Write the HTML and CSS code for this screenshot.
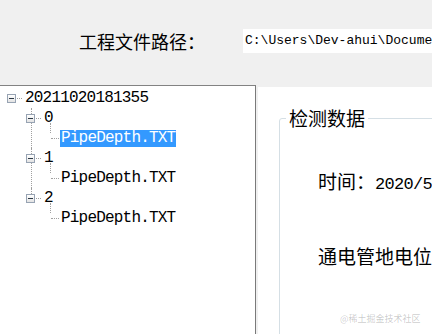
FILE: index.html
```html
<!DOCTYPE html>
<html lang="zh-CN">
<head>
  <meta charset="UTF-8" />
  <meta name="viewport" content="width=device-width, initial-scale=1.0"/>
  <title>管道检测数据</title>
  <link rel="stylesheet" href="styles.css">
</head>
<body>

<div class="path-bar">
  <span class="path-label">工程文件路径：</span>
  <div class="path-input">C:\Users\Dev-ahui\Documents</div>
</div>

<div class="main">
  <div class="tree-panel">
    <ul class="tree">
      <li class="node root">
        <div class="row"><span class="expander"></span><span class="link"></span><span class="label">20211020181355</span></div>
        <ul class="children">
          <li class="node">
            <div class="row"><span class="expander"></span><span class="link"></span><span class="label">0</span></div>
            <ul class="children leaves">
              <li class="leaf"><div class="row"><span class="label selected">PipeDepth.TXT</span></div></li>
            </ul>
          </li>
          <li class="node">
            <div class="row"><span class="expander"></span><span class="link"></span><span class="label">1</span></div>
            <ul class="children leaves">
              <li class="leaf"><div class="row"><span class="label">PipeDepth.TXT</span></div></li>
            </ul>
          </li>
          <li class="node">
            <div class="row"><span class="expander"></span><span class="link"></span><span class="label">2</span></div>
            <ul class="children leaves">
              <li class="leaf"><div class="row"><span class="label">PipeDepth.TXT</span></div></li>
            </ul>
          </li>
        </ul>
      </li>
    </ul>
  </div>

  <div class="detail-panel">
    <fieldset class="group">
      <legend>检测数据</legend>
      <div class="group-body">
        <div class="field">时间：<span class="num">2020/5/20</span></div>
        <div class="field">通电管地电位：</div>
      </div>
    </fieldset>
  </div>
</div>

<div class="watermark">@稀土掘金技术社区</div>

</body>
</html>
```

FILE: styles.css
```css
html, body {
  margin: 0;
  padding: 0;
  background: #f0f0f0;
}

body {
  position: relative;
  width: 432px;
  height: 334px;
  overflow: hidden;
  font-family: "Noto Sans CJK SC", sans-serif;
  color: #000;
}

/* top path bar */
.path-bar {
  height: 85px;
  box-sizing: border-box;
  padding: 29px 0 0 79px;
  display: flex;
  align-items: flex-start;
  gap: 38px;
  white-space: nowrap;
}

.path-label {
  font-size: 18px;
  line-height: 24px;
  height: 24px;
}

.path-input {
  flex: none;
  width: 220px;
  height: 24px;
  line-height: 24px;
  padding-left: 2px;
  background: #fff;
  font-family: "Liberation Mono", monospace;
  font-size: 13px;
  overflow: hidden;
}

.main {
  display: flex;
  height: 249px;
}

/* tree view */
.tree-panel {
  flex: none;
  width: 255px;
  background: #fff;
  border-top: 1px solid #828282;
  border-right: 1px solid #7a7a7a;
  padding-top: 2px;
  font-family: "Liberation Mono", monospace;
  font-size: 16px;
  letter-spacing: -0.8px;
}

.tree, .children {
  list-style: none;
  margin: 0;
  padding: 0;
}

.row {
  height: 20px;
  display: flex;
  align-items: center;
  white-space: nowrap;
}

.root > .row {
  padding-left: 7px;
}

.children > li {
  position: relative;
  padding-left: 26px;
}

.children > li::before {
  content: '';
  position: absolute;
  left: 31px;
  top: 0;
  bottom: 0;
  border-left: 1px dotted #a0a0a0;
}

.children > li:last-child::before {
  bottom: auto;
  height: 10px;
}

/* leaf rows sit inside the parent item, which already has 26px padding */
.leaves > li {
  padding-left: 0;
}

.leaves > li::before {
  left: 24px;
  top: -5px;
  height: 15px;
}

.leaves > li::after {
  content: '';
  position: absolute;
  left: 25px;
  top: 10px;
  width: 8px;
  border-top: 1px dotted #a0a0a0;
}

.leaves .row {
  padding-left: 34px;
}

.expander {
  flex: none;
  position: relative;
  width: 7px;
  height: 7px;
  border: 1px solid #97a3b3;
  background: linear-gradient(#fff, #e3e3e3);
  z-index: 1;
}

.expander::after {
  content: '';
  position: absolute;
  left: 1px;
  top: 3px;
  width: 5px;
  height: 1px;
  background: #2b3845;
}

.link {
  flex: none;
  width: 5px;
  margin: 0 2px 0 1px;
  border-top: 1px dotted #a0a0a0;
}

.label {
  line-height: 17px;
  padding: 0 1px;
}

.label.selected {
  background: #3399ff;
  color: #fff;
}

/* detail group box */
.detail-panel {
  flex: 1;
  margin: 2px 0 0 2px;
  background: #fff;
  overflow: hidden;
}

.group {
  margin: 21px 0 0 21px;
  padding: 0;
  width: 240px;
  min-height: 260px;
  border: 1px solid #d5dfe5;
  border-radius: 3px;
}

.group legend {
  margin-left: 6px;
  padding: 0 3px;
  font-size: 19px;
  line-height: 20px;
}

.group-body {
  padding: 43px 0 0 38px;
}

.field {
  font-size: 19px;
  line-height: 20px;
  height: 20px;
  margin-bottom: 55px;
  white-space: nowrap;
}

.num {
  font-family: "Liberation Mono", monospace;
  font-size: 17px;
  letter-spacing: -0.7px;
}

.watermark {
  position: absolute;
  left: 340px;
  top: 312px;
  font-size: 9px;
  color: rgba(0, 0, 0, 0.22);
  white-space: nowrap;
}
```
